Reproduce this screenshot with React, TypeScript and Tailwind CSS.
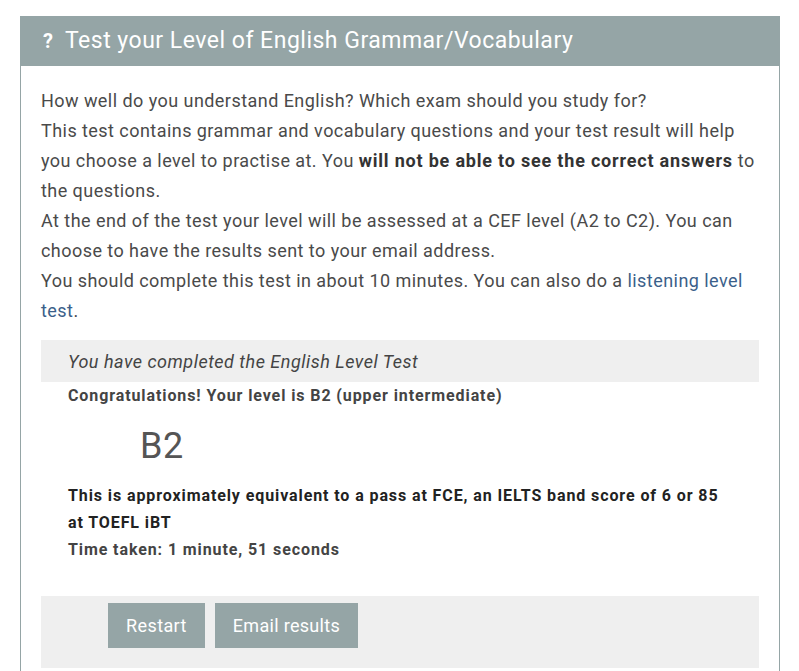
export default function App() {
  return (
    <div className="min-h-screen bg-white pt-4 pl-5 font-['Roboto','Liberation_Sans',sans-serif]">
      <div className="w-[760px] border border-[#95a5a6] border-t-0 pb-10">
        {/* HEADER */}
        <div className="h-[50px] bg-[#95a5a6] flex items-center pl-[22px] text-white">
          <span className="text-[20px] font-bold mr-[12px]">?</span>
          <span className="text-[23px] tracking-[0.5px]">Test your Level of English Grammar/Vocabulary</span>
        </div>

        <div className="px-5 pt-[20px]">
          <div className="text-[18px] leading-[30px] text-[#4a4a4a] tracking-[0.45px]">
            <p>How well do you understand English? Which exam should you study for?</p>
            <p>
              This test contains grammar and vocabulary questions and your test result will help you choose a level to
              practise at. You{" "}
              <b className="text-[#333] tracking-[0.8px]">will not be able to see the correct answers</b> to the
              questions.
            </p>
            <p>
              At the end of the test your level will be assessed at a CEF level (A2 to C2). You can choose to have the
              results sent to your email address.
            </p>
            <p>
              You should complete this test in about 10 minutes. You can also do a{" "}
              <a className="text-[#3b5f8a]">listening level test</a>.
            </p>
          </div>

          {/* RESULT */}
          <div className="mt-[14px] h-[42px] bg-[#efefef] flex items-center pl-[27px]">
            <span className="text-[18px] italic text-[#444] tracking-[0.5px]">You have completed the English Level Test</span>
          </div>

          <div className="pl-[27px] pr-[27px]">
            <p className="text-[16px] leading-[27px] font-bold text-[#444] tracking-[0.9px]">
              Congratulations! Your level is B2 (upper intermediate)
            </p>
            <p className="mt-[17px] ml-[72px] text-[36px] leading-[40px] text-[#555] tracking-[0.5px]">B2</p>
            <p className="mt-[16px] text-[16px] leading-[27px] font-bold text-[#222] tracking-[0.9px]">
              This is approximately equivalent to a pass at FCE, an IELTS band score of 6 or 85 at TOEFL iBT
            </p>
            <p className="text-[16px] leading-[27px] font-bold text-[#444] tracking-[0.9px]">
              Time taken: 1 minute, 51 seconds
            </p>
          </div>

          <div className="mt-[33px] bg-[#efefef] pt-[7px] pb-[20px] pl-[67px] flex gap-[10px]">
            <button className="h-[45px] px-[18px] bg-[#95a5a6] text-white text-[18px] tracking-[0.4px]">Restart</button>
            <button className="h-[45px] px-[18px] bg-[#95a5a6] text-white text-[18px] tracking-[0.3px]">
              Email results
            </button>
          </div>
        </div>
      </div>
    </div>
  );
}
